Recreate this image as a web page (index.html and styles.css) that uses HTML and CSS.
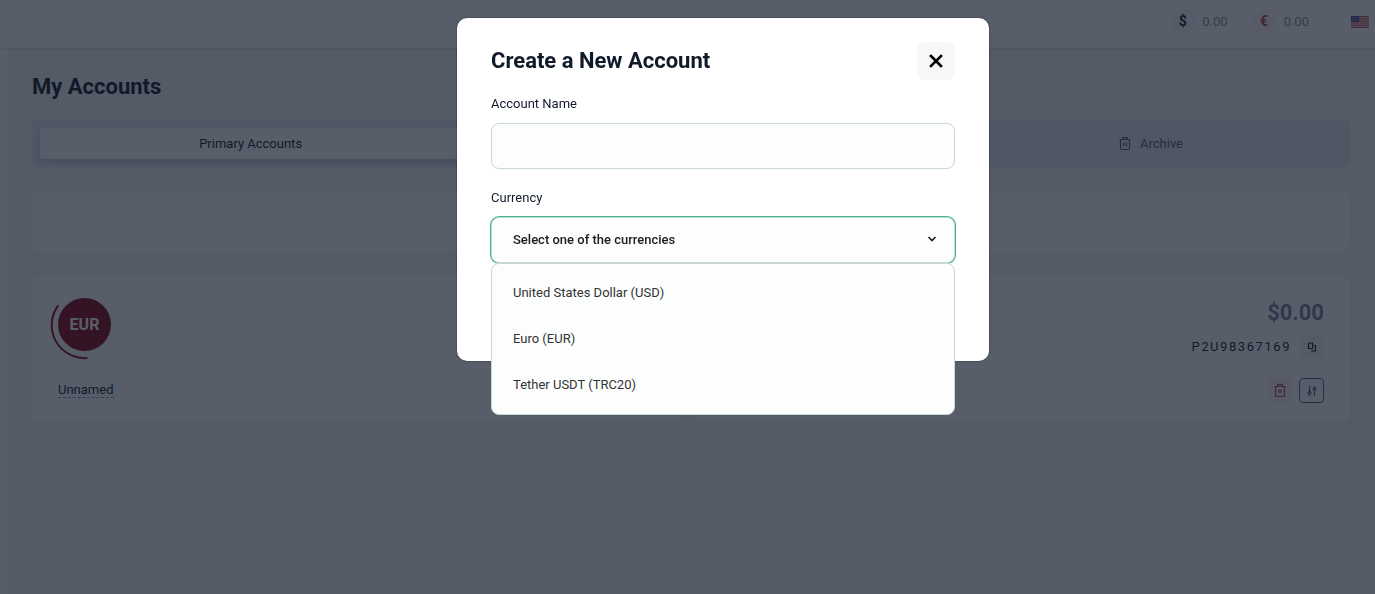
FILE: index.html
```
<!DOCTYPE html>
<html lang="en">
<head>
    <meta charset="UTF-8">
    <meta name="viewport" content="width=device-width, initial-scale=1.0">
    <title>My Accounts</title>
    <link rel="stylesheet" href="styles.css">
</head>
<body>
    <header class="topbar">
        <div class="balance">
            <span class="balance-icon usd">$</span>
            <span>0.00</span>
        </div>
        <div class="balance">
            <span class="balance-icon eur">€</span>
            <span>0.00</span>
        </div>
        <button class="lang-btn" type="button" aria-label="Language">
            <svg width="18" height="12" viewBox="0 0 18 12">
                <rect width="18" height="12" rx="1" fill="#f0e4e8"/>
                <path d="M0 .5h18M0 2.300h18M0 4.100h18M0 6h18M0 7.900h18M0 9.700h18M0 11.500h18" stroke="#d0404f" stroke-width=".95"/>
                <rect width="8" height="6" fill="#3c4f8f"/>
                <path d="M1 1.500h6M1 4.500h6M2 3h5" stroke="#c5cce0" stroke-width=".6" stroke-dasharray="1 1"/>
            </svg>
        </button>
    </header>

    <main class="content">
        <h1>My Accounts</h1>

        <nav class="tabs">
            <button class="tab active" type="button">Primary Accounts</button>
            <button class="tab archive" type="button">
                <svg class="icon" width="14" height="14" viewBox="0 0 14 14">
                    <path d="M1.500 2.500h11M4.500 2.500V.600h5v1.900M2.500 2.500V11A1.500 1.500 0 0 0 4 12.500h6a1.500 1.500 0 0 0 1.500-1.500V2.500M5.800 5.500V9M8.200 5.500V9"/>
                </svg>
                Archive
            </button>
        </nav>

        <section class="panel toolbar"></section>

        <section class="cards">
            <article class="panel card">
                <svg class="card-mark" width="133" height="118" viewBox="0 0 133 118">
                    <defs>
                        <linearGradient id="mark" x1="1" y1="0" x2="0" y2="1">
                            <stop offset="0" stop-color="#f6f7f9"/>
                            <stop offset="1" stop-color="#fdfdfe"/>
                        </linearGradient>
                    </defs>
                    <path d="M0 75 68 12C88-6 132 2 132 38c0 12-6 24-11 38l-14 41H30L0 92Z" fill="url(#mark)"/>
                </svg>
                <div class="account">
                    <svg width="62" height="63" viewBox="0 0 62 63" class="badge" role="img" aria-label="EUR">
                        <circle cx="34.500" cy="27.500" r="26.500" fill="#87061a"/>
                        <path d="M8.300 8.300A33 33 0 0 0 37.500 61" fill="none" stroke="#87061a" stroke-width="2"/>
                        <text x="34.500" y="33" text-anchor="middle">EUR</text>
                    </svg>
                    <a class="account-name" href="#">Unnamed</a>
                </div>
            </article>
            <article class="panel card">
                <div class="details">
                    <div class="amount">$0.00</div>
                    <div class="number-row">
                        <span class="number">P2U98367169</span>
                        <button class="mini copy" type="button" aria-label="Copy account number">
                            <svg class="icon" width="10" height="10" viewBox="0 0 10 10">
                                <path d="M2.500 1h3v5.500h-4V2zM7 3.500h1.500V9H5V8"/>
                            </svg>
                        </button>
                    </div>
                    <div class="actions">
                        <button class="mini delete" type="button" aria-label="Delete">
                            <svg class="icon" width="14" height="14" viewBox="0 0 14 14">
                                <path d="M1.500 2.500h11M4.500 2.500V.600h5v1.900M2.500 2.500V11A1.500 1.500 0 0 0 4 12.500h6a1.500 1.500 0 0 0 1.500-1.500V2.500M5.800 5.500V9M8.200 5.500V9"/>
                            </svg>
                        </button>
                        <button class="mini settings" type="button" aria-label="Settings">
                            <svg class="icon" width="12" height="12" viewBox="0 0 12 12">
                                <path d="M3.500 1v5M3.500 9.500V11M8.500 1v1M8.500 5.500V11"/>
                                <path d="M3.500 6 5 7.700 3.500 9.500 2 7.700zM8.500 2 10 3.700 8.500 5.500 7 3.700z"/>
                            </svg>
                        </button>
                    </div>
                </div>
            </article>
        </section>
    </main>

    <div class="overlay">
        <form class="modal" role="dialog" aria-labelledby="modal-title">
            <div class="modal-header">
                <h2 id="modal-title">Create a New Account</h2>
                <button class="close-btn" type="button" aria-label="Close">
                    <svg width="14" height="14" viewBox="0 0 14 14">
                        <path d="M2 2l10 10M12 2 2 12" stroke="#000" stroke-width="2.600" stroke-linecap="square"/>
                    </svg>
                </button>
            </div>

            <label for="account-name">Account Name</label>
            <input type="text" id="account-name">

            <label for="currency">Currency</label>
            <div class="select-wrap">
                <select id="currency">
                    <option>Select one of the currencies</option>
                    <option>United States Dollar (USD)</option>
                    <option>Euro (EUR)</option>
                    <option>Tether USDT (TRC20)</option>
                </select>
                <svg class="chevron" width="10" height="6" viewBox="0 0 10 6">
                    <path d="M1.500 1 5 4.500 8.500 1" fill="none" stroke="#1c1c1c" stroke-width="1.600"/>
                </svg>
                <ul class="options">
                    <li>United States Dollar (USD)</li>
                    <li>Euro (EUR)</li>
                    <li>Tether USDT (TRC20)</li>
                </ul>
            </div>
        </form>
    </div>
</body>
</html>
```
FILE: styles.css
```
* {
    box-sizing: border-box;
}
body {
    margin: 0;
    min-height: 100vh;
    display: flex;
    flex-direction: column;
    font-family: Roboto, sans-serif;
    font-size: 13px;
    line-height: 20px;
    color: #111a2b;
    background-color: #fff;
}
h1, h2 {
    margin: 0;
    font-size: 22px;
    line-height: 28px;
    font-weight: 700;
}
button {
    padding: 0;
    border: none;
    background: none;
    color: inherit;
    font: inherit;
    cursor: pointer;
}
.icon {
    fill: none;
    stroke: currentColor;
    stroke-width: 1.2;
}

/* Top bar */
.topbar {
    position: relative;
    display: flex;
    align-items: center;
    justify-content: flex-end;
    height: 48px;
    padding: 0 6px 5px 0;
    box-shadow: 0 1px 3px rgba(30, 40, 80, 0.15);
}
.balance {
    display: flex;
    align-items: center;
    gap: 7px;
    margin-right: 24px;
    color: #8a8c90;
}
.balance-icon {
    width: 25px;
    height: 25px;
    border-radius: 50%;
    background-color: #f7f7f9;
    text-align: center;
    font-size: 14px;
    line-height: 25px;
    font-weight: 700;
}
.usd {
    color: #111a2b;
}
.eur {
    color: #b8485a;
    background-color: #fbf3f3;
}
.lang-btn {
    display: flex;
    margin-left: 18px;
}

/* Page content */
.content {
    flex: 1;
    margin-left: 7px;
    padding: 25px;
    background-color: #f2f3f7;
}
.tabs {
    display: grid;
    grid-template-columns: 11fr 13fr 10fr;
    margin: 19px 0 25px;
    padding: 8px;
    border-radius: 5px;
    background-color: #e4e6ef;
}
.tab {
    display: flex;
    align-items: center;
    justify-content: center;
    gap: 8px;
    height: 31px;
    border-radius: 4px;
}
.tab.active {
    background-color: #fff;
    box-shadow: 0 3px 10px rgba(30, 40, 80, 0.2);
}
.tab.archive {
    grid-column: 3;
    color: #5b6172;
}
.panel {
    border-radius: 8px;
    background-color: #fff;
}
.toolbar {
    height: 59px;
    margin-bottom: 25px;
}
.cards {
    display: grid;
    grid-template-columns: 1fr 1fr;
    gap: 12px;
}
.card {
    position: relative;
    min-height: 145px;
    padding: 21px 26px 17px;
}
.card-mark {
    position: absolute;
    top: 5px;
    left: 0;
}
.account {
    position: relative;
    display: flex;
    flex-direction: column;
    align-items: flex-start;
    gap: 22px;
}
.badge {
    margin-left: -8px;
}
.badge text {
    fill: #fff;
    font-size: 16px;
    font-weight: 700;
}
.account-name {
    border-bottom: 1px dashed #8a94b0;
    color: inherit;
    line-height: 15px;
    text-decoration: none;
}
.details {
    display: flex;
    flex-direction: column;
    align-items: flex-end;
}
.amount {
    color: #76819a;
    font-size: 22px;
    line-height: 32px;
    font-weight: 700;
}
.number-row {
    display: flex;
    align-items: center;
    gap: 8px;
    margin: 6px 0 20px;
}
.number {
    letter-spacing: 0.12em;
}
.mini {
    display: flex;
    align-items: center;
    justify-content: center;
    width: 25px;
    height: 25px;
    border-radius: 4px;
}
.copy {
    height: 23px;
    background-color: #f2f3f6;
}
.actions {
    display: flex;
    gap: 7px;
}
.delete {
    color: #b8485a;
    background-color: #fbeef0;
}
.settings {
    border: 1px solid #56607a;
    color: #56607a;
}

/* Modal */
.overlay {
    position: fixed;
    inset: 0;
    display: flex;
    justify-content: center;
    align-items: flex-start;
    padding: 18px 0 18px 71px;
    background-color: rgba(17, 26, 42, 0.7);
}
.modal {
    width: 100%;
    max-width: 532px;
    padding: 24px 34px 98px;
    border-radius: 10px;
    background-color: #fff;
    box-shadow: 0 0 2px rgba(0, 0, 0, 0.6);
}
.modal-header {
    display: flex;
    align-items: center;
    justify-content: space-between;
    margin-bottom: 13px;
}
.close-btn {
    display: flex;
    align-items: center;
    justify-content: center;
    width: 38px;
    height: 38px;
    border-radius: 8px;
    background-color: #f7f7f7;
}
label {
    display: block;
    padding-top: 1px;
    margin-bottom: 9px;
}
input[type="text"], select {
    display: block;
    width: 100%;
    height: 46px;
    padding: 0 21px;
    border: 1px solid #cad8d5;
    border-radius: 8px;
    outline: none;
    background-color: #fcfefd;
    color: #1c1c1c;
    font: inherit;
}
input[type="text"] {
    margin-bottom: 18px;
}
.select-wrap {
    position: relative;
}
select {
    appearance: none;
    font-weight: 500;
    box-shadow: 0 0 0 1px #3fb88c;
}
.chevron {
    position: absolute;
    top: 19px;
    right: 18px;
    pointer-events: none;
}
.options {
    position: absolute;
    top: 100%;
    left: 0;
    right: 0;
    margin: 0;
    padding: 6px 0;
    border: 1px solid #cad8d5;
    border-radius: 8px;
    background-color: #fcfefd;
    color: #333;
    list-style: none;
}
.options li {
    padding: 13px 21px;
}
```
